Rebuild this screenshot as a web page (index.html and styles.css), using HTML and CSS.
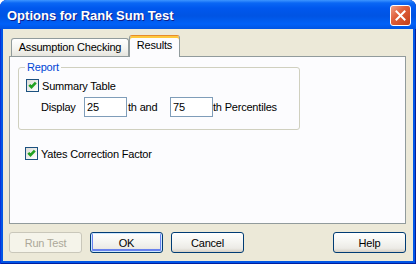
FILE: index.html
```html
<!DOCTYPE html>
<html lang="en">
	<head>
		<meta charset="UTF-8" />
		<meta name="viewport" content="width=device-width, initial-scale=1.0" />
		<title>Options for Rank Sum Test</title>
		<link rel="stylesheet" href="styles.css">
	</head>
	<body>
		<div class="window">
			<div class="titlebar">
				<span class="title">Options for Rank Sum Test</span>
				<button class="close" aria-label="Close">
					<svg width="11" height="11" viewBox="0 0 11 11">
						<path d="M1.5 1.5 L9.5 9.5 M9.5 1.5 L1.5 9.5" stroke="#fff" stroke-width="2" stroke-linecap="square" />
					</svg>
				</button>
			</div>
			<div class="client">
				<div class="tabs">
					<div class="tab">Assumption Checking</div>
					<div class="tab active">Results</div>
				</div>
				<div class="page">
					<div class="group">
						<div class="group-title">Report</div>
						<label class="check-row">
							<span class="checkbox">
								<svg width="11" height="11" viewBox="0 0 11 11">
									<path d="M2.3 4.8 L4.5 7.2 L8.8 2.6" fill="none" stroke="#21a121" stroke-width="2.6" />
								</svg>
							</span>
							Summary Table
						</label>
						<div class="display-row">
							<span class="lbl-display">Display</span>
							<input class="field" type="text" value="25">
							<span class="lbl-and">th and</span>
							<input class="field" type="text" value="75">
							<span>th Percentiles</span>
						</div>
					</div>
					<label class="check-row yates">
						<span class="checkbox">
							<svg width="11" height="11" viewBox="0 0 11 11">
								<path d="M2.3 4.8 L4.5 7.2 L8.8 2.6" fill="none" stroke="#21a121" stroke-width="2.6" />
							</svg>
						</span>
						Yates Correction Factor
					</label>
				</div>
				<div class="buttons">
					<button class="btn" disabled>Run Test</button>
					<button class="btn default">OK</button>
					<button class="btn">Cancel</button>
					<span class="spacer"></span>
					<button class="btn">Help</button>
				</div>
			</div>
		</div>
	</body>
</html>
```

FILE: styles.css
```css
body {
	margin: 0;
	background: #fff;
	font-family: "Liberation Sans", Arial, sans-serif;
	font-size: 11px;
	letter-spacing: -0.2px;
}
.window {
	width: 416px;
	height: 264px;
	display: flex;
	flex-direction: column;
	background: #0055e5;
	border-radius: 7px 7px 0 0;
	box-shadow: inset 1px 0 #0831d9, inset -1px 0 #001ea0, inset 0 -1px #001ea0;
}
.titlebar {
	height: 29px;
	display: flex;
	align-items: center;
	justify-content: space-between;
	padding: 0 5px 0 7px;
	border-radius: 7px 7px 0 0;
	background: linear-gradient(#3d95ff 0, #0a67f5 3px, #0058ee 8px, #0054e3 16px, #0061f8 24px, #0054e3 29px);
}
.title {
	color: #fff;
	font-size: 13px;
	font-weight: bold;
	letter-spacing: 0;
	text-shadow: 1px 1px #0f1f8a;
	margin-top: 1px;
}
.close {
	width: 21px;
	height: 21px;
	padding: 0;
	margin-top: 1px;
	display: flex;
	align-items: center;
	justify-content: center;
	border: 1px solid #fff;
	border-radius: 3px;
	background: linear-gradient(135deg, #f0a088 0, #e0603c 40%, #c43e17 100%);
}
.client {
	flex: 1;
	margin: 0 3px 3px 3px;
	background: #ece9d8;
	padding: 6px 7px 8px 6px;
	display: flex;
	flex-direction: column;
}
.tabs {
	height: 21px;
	display: flex;
	align-items: flex-end;
	padding-left: 2px;
}
.tab {
	box-sizing: border-box;
	height: 18px;
	width: 118px;
	display: flex;
	align-items: center;
	justify-content: center;
	border: 1px solid #919b9c;
	border-bottom: none;
	border-radius: 3px 3px 0 0;
	background: linear-gradient(#fff, #f3f3ef 60%, #e6e5de);
	padding-bottom: 1px;
}
.tab.active {
	position: relative;
	z-index: 1;
	width: 51px;
	height: 22px;
	margin-bottom: -1px;
	border-top: 1px solid #e68b2c;
	box-shadow: inset 0 2px #ffc83c;
	background: #fcfcfe;
	padding-bottom: 3px;
}
.page {
	box-sizing: border-box;
	height: 168px;
	border: 1px solid #919b9c;
	background: #fcfcfe;
	padding: 10px 0 0 8px;
}
.group {
	box-sizing: border-box;
	width: 282px;
	height: 63px;
	border: 1px solid #d0d0bf;
	border-radius: 3px;
}
.group-title {
	width: max-content;
	margin: -7px 0 0 6px;
	padding: 0 2px;
	line-height: 13px;
	color: #0046d5;
	background: #fcfcfe;
}
.check-row {
	display: flex;
	align-items: center;
	gap: 3px;
	height: 13px;
	margin: 5px 0 0 7px;
}
.checkbox {
	box-sizing: border-box;
	width: 13px;
	height: 13px;
	display: flex;
	align-items: center;
	justify-content: center;
	border: 1px solid #1c5180;
	background: linear-gradient(135deg, #dcdcd7, #fff);
}
.display-row {
	display: flex;
	align-items: center;
	height: 20px;
	margin: 5px 0 0 22px;
}
.lbl-display {
	width: 43px;
}
.lbl-and {
	width: 42px;
	padding-left: 1px;
}
.field {
	box-sizing: border-box;
	width: 43px;
	height: 20px;
	margin: 0;
	padding: 0 2px;
	border: 1px solid #7f9db9;
	background: #fff;
	font: inherit;
	letter-spacing: inherit;
	outline: none;
}
.check-row.yates {
	margin-top: 17px;
}
.buttons {
	display: flex;
	gap: 8px;
	margin-top: 8px;
	height: 21px;
}
.spacer {
	flex: 1;
}
.btn {
	box-sizing: border-box;
	width: 73px;
	height: 21px;
	padding: 0;
	border: 1px solid #003c74;
	border-radius: 3px;
	background: linear-gradient(#fff, #f4f4f0 50%, #ecebe6 80%, #d6d0c5);
	font: inherit;
	letter-spacing: inherit;
	color: #000;
}
.btn.default {
	box-shadow: inset 0 0 0 1px #cee7ff, inset 0 -1px 0 2px #6982ee;
}
.btn:disabled {
	border-color: #c9c7ba;
	background: #f5f4ea;
	color: #aca899;
}
```
